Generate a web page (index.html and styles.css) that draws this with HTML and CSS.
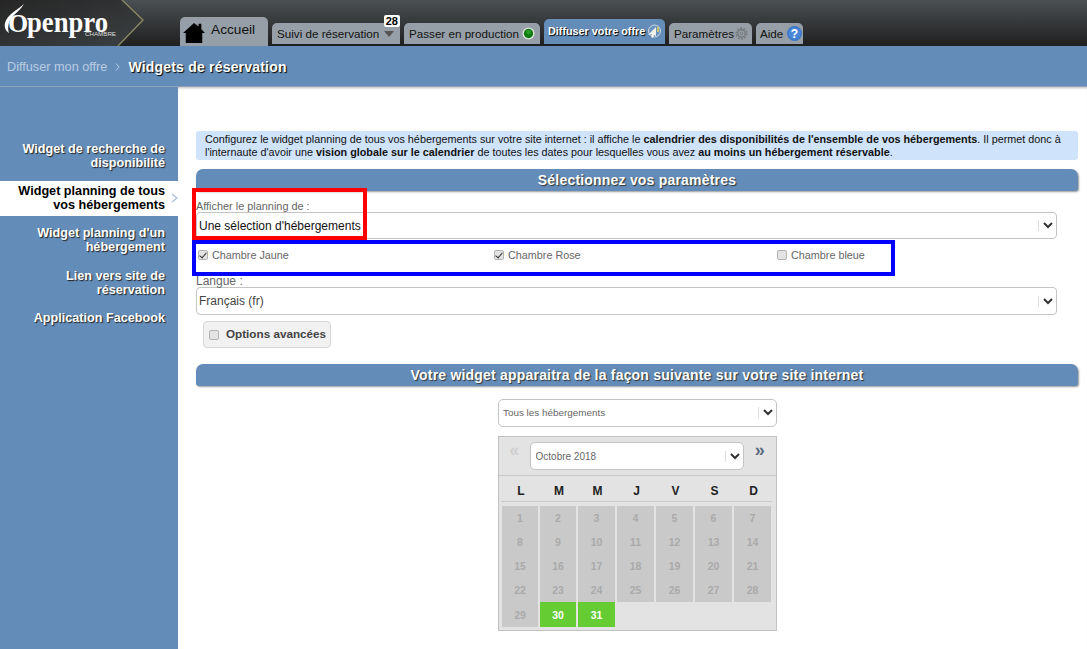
FILE: index.html
```html
<!DOCTYPE html>
<html lang="fr">
<head>
<meta charset="utf-8">
<title>Widgets de réservation</title>
<link rel="stylesheet" href="styles.css">
</head>
<body>
<header class="topbar">
  <div class="logo">
    <svg class="logo-art" width="150" height="46" viewBox="0 0 150 46">
      <defs><linearGradient id="lg" x1="0" y1="0" x2="1" y2="1"><stop offset="0" stop-color="#262626"/><stop offset="1" stop-color="#3c4042"/></linearGradient></defs>
      <polygon points="0,0 122,0 143,20 118,46 0,46" fill="url(#lg)"/>
      <path d="M122 0 L143 20 L118 46" fill="none" stroke="#8d8a68" stroke-width="1.3"/>
      <path d="M24 4 C17 10 7 15 5 23 C4 28 6 31 9 33 C7 27 9 20 13 16 C17 12 21 9 24 4 Z" fill="#fff"/>
      <text class="logo-o" x="8" y="32">O</text>
      <text class="logo-name" x="27" y="32" textLength="81" lengthAdjust="spacingAndGlyphs">penpro</text>
      <text class="logo-sub" x="85" y="36" textLength="31" lengthAdjust="spacingAndGlyphs">CHAMBRE</text>
    </svg>
  </div>
  <nav class="tabs">
    <a class="tab tab-home">
      <svg width="22" height="22" viewBox="0 0 24 24"><path d="M12 1 L17 5 V2 H20 V8 L24 12 H21 V23 H3 V12 H0 Z" fill="#000"/></svg>
      <span>Accueil</span>
    </a>
    <a class="tab tab-suivi">
      <span>Suivi de réservation</span>
      <svg width="10" height="6" viewBox="0 0 12 7"><path d="M0 0 H12 L6 7 Z" fill="#555"/></svg>
      <b class="badge">28</b>
    </a>
    <a class="tab tab-prod">
      <span>Passer en production</span>
      <svg width="13" height="13" viewBox="0 0 14 14"><circle cx="7" cy="7" r="6.5" fill="#dfe5df"/><circle cx="7" cy="7" r="5" fill="#0e7a0e"/><circle cx="7" cy="5.5" r="2.5" fill="#2b9a2b"/></svg>
    </a>
    <a class="tab tab-active">
      <span>Diffuser votre offre</span>
      <svg width="14" height="16" viewBox="0 0 14 16"><circle cx="7.5" cy="7" r="6" fill="#6b93bf" stroke="#cfd8e2"/><path d="M1 11 L9 3 V12 L7 11 L6 14 L4 13 L5 10 Z" fill="#f1f1ea"/><path d="M11 3 V8" stroke="#e8d44a" stroke-width="1.5"/></svg>
    </a>
    <a class="tab tab-param">
      <span>Paramètres</span>
      <svg width="13" height="13" viewBox="0 0 14 14"><circle cx="7" cy="7" r="4" fill="none" stroke="#74797e" stroke-width="1.5"/><circle cx="7" cy="7" r="5.8" fill="none" stroke="#74797e" stroke-width="1.6" stroke-dasharray="2 1.6"/><circle cx="7" cy="7" r="1.5" fill="none" stroke="#74797e"/></svg>
    </a>
    <a class="tab tab-help">
      <span>Aide</span>
      <svg width="15" height="15" viewBox="0 0 15 15"><circle cx="7.5" cy="7.5" r="7.5" fill="#3b76c8"/><circle cx="7.5" cy="7.5" r="6" fill="#4a86d8"/><text class="help-mark" x="7.5" y="11.5">?</text></svg>
    </a>
  </nav>
</header>

<div class="crumbs">
  <span class="crumb-parent">Diffuser mon offre</span>
  <svg width="5" height="8" viewBox="0 0 5 8"><path d="M1 0.5 L4 4 L1 7.5" fill="none" stroke="#b9cce2"/></svg>
  <strong class="crumb-current">Widgets de réservation</strong>
</div>

<div class="layout">
  <aside class="side">
    <a class="side-item">Widget de recherche de disponibilité</a>
    <a class="side-item side-active">Widget planning de tous vos hébergements
      <svg class="side-arrow" width="7" height="10" viewBox="0 0 7 10"><path d="M1 1 L6 5 L1 9" fill="none" stroke="#a9bdd6" stroke-width="1.2"/></svg>
    </a>
    <a class="side-item side-wide">Widget planning d'un hébergement</a>
    <a class="side-item">Lien vers site de réservation</a>
    <a class="side-item">Application Facebook</a>
  </aside>

  <main class="content">
    <p class="info">Configurez le widget planning de tous vos hébergements sur votre site internet : il affiche le <b>calendrier des disponibilités de l'ensemble de vos hébergements</b>. Il permet donc à l'internaute d'avoir une <b>vision globale sur le calendrier</b> de toutes les dates pour lesquelles vous avez <b>au moins un hébergement réservable</b>.</p>

    <h2 class="section">Sélectionnez vos paramètres</h2>

    <div class="form">
      <div class="mark-red"></div>
      <div class="mark-blue"></div>
      <label class="field-label">Afficher le planning de :</label>
      <div class="select select-main">
        <span class="select-value is-dark">Une sélection d'hébergements</span>
        <i class="select-sep"></i>
        <svg class="chev" width="10" height="7" viewBox="0 0 10 7"><path d="M1 1 L5 5 L9 1" fill="none" stroke="#333" stroke-width="2"/></svg>
      </div>
      <div class="checks">
        <label class="check check-a"><input type="checkbox" checked>Chambre Jaune</label>
        <label class="check check-b"><input type="checkbox" checked>Chambre Rose</label>
        <label class="check check-c"><input type="checkbox">Chambre bleue</label>
      </div>
      <label class="field-label field-lang">Langue :</label>
      <div class="select select-main select-lang">
        <span class="select-value">Français (fr)</span>
        <i class="select-sep"></i>
        <svg class="chev" width="10" height="7" viewBox="0 0 10 7"><path d="M1 1 L5 5 L9 1" fill="none" stroke="#333" stroke-width="2"/></svg>
      </div>
      <label class="adv"><input type="checkbox">Options avancées</label>
    </div>

    <h2 class="section section-two">Votre widget apparaitra de la façon suivante sur votre site internet</h2>

    <div class="widget">
      <div class="select select-small">
        <span class="select-value">Tous les hébergements</span>
        <i class="select-sep"></i>
        <svg class="chev" width="10" height="7" viewBox="0 0 10 7"><path d="M1 1 L5 5 L9 1" fill="none" stroke="#333" stroke-width="2"/></svg>
      </div>
      <div class="cal">
        <div class="cal-head">
          <span class="cal-nav cal-prev">«</span>
          <div class="select select-month">
            <span class="select-value">Octobre 2018</span>
            <i class="select-sep"></i>
            <svg class="chev" width="10" height="7" viewBox="0 0 10 7"><path d="M1 1 L5 5 L9 1" fill="none" stroke="#333" stroke-width="2"/></svg>
          </div>
          <span class="cal-nav cal-next">»</span>
        </div>
        <div class="cal-days"><span>L</span><span>M</span><span>M</span><span>J</span><span>V</span><span>S</span><span>D</span></div>
        <div class="cal-grid">
          <span>1</span><span>2</span><span>3</span><span>4</span><span>5</span><span>6</span><span>7</span>
          <span>8</span><span>9</span><span>10</span><span>11</span><span>12</span><span>13</span><span>14</span>
          <span>15</span><span>16</span><span>17</span><span>18</span><span>19</span><span>20</span><span>21</span>
          <span>22</span><span>23</span><span>24</span><span>25</span><span>26</span><span>27</span><span>28</span>
          <span>29</span><span class="free">30</span><span class="free">31</span>
        </div>
      </div>
    </div>
  </main>
</div>
</body>
</html>
```

FILE: styles.css
```css
* { box-sizing: border-box; }
html, body { margin: 0; height: 649px; overflow: hidden; }
body { font-family: "Liberation Sans", Arial, sans-serif; background: #638cb9; color: #000; display: flex; flex-direction: column; }

.topbar { height: 46px; flex: none; display: flex; align-items: flex-end; background: linear-gradient(#4b5053, #1f1f1f); }
.logo { width: 180px; height: 46px; flex: none; }
.logo-art { display: block; }
.logo-name, .logo-o { font-family: "Liberation Serif", serif; font-weight: bold; font-size: 29px; fill: #fff; }
.logo-o { font-size: 26px; }
.logo-sub { font-size: 6px; fill: #ddd; }
.help-mark { font-size: 12px; font-weight: bold; fill: #fff; text-anchor: middle; }

.tabs { display: flex; align-items: flex-end; gap: 4px; height: 46px; }
.tab { position: relative; display: flex; align-items: center; height: 21px; margin-bottom: 2px; background: #969fa7; border-radius: 5px 5px 0 0; font-size: 11.65px; color: #111; white-space: nowrap; justify-content: space-between; }
.tab-home { width: 88px; height: 29px; margin-bottom: 0; padding: 0 0 0 3px; justify-content: flex-start; gap: 6px; font-size: 13.7px; }
.tab-home span { margin-top: -5px; }
.tab-home svg { margin-top: 2px; }
.tab-suivi { width: 128px; padding: 0 6px 0 5px; }
.tab-prod { width: 136px; padding: 0 5px; }
.tab-active { width: 121px; height: 25px; padding: 6px 4px 0; align-items: flex-start; background: #638cb9; color: #fff; font-weight: bold; font-size: 10.8px; text-shadow: 1px 1px 1px #000; }
.tab-active svg { margin-top: -1px; }
.tab-param { width: 83px; padding: 0 4px 0 5px; }
.tab-help { width: 47px; padding: 0 1px 0 4px; }
.badge { position: absolute; top: -8px; right: 0; background: #fff; color: #000; font-size: 11px; line-height: 12px; padding: 0 2px; border-radius: 2px; }

.crumbs { height: 41px; flex: none; display: flex; align-items: center; gap: 8px; padding-left: 7px; box-shadow: inset 0 -1px 0 #8fa3b8; }
.crumb-parent { font-size: 12.7px; color: #b9cce2; }
.crumb-current { font-size: 14px; letter-spacing: 0.2px; color: #fff; text-shadow: 1px 1px 1px #000; }

.layout { flex: 1; display: flex; min-height: 0; }
.side { width: 178px; flex: none; padding-top: 52px; }
.side-item { position: relative; display: block; height: 35px; margin-bottom: 7px; padding: 3px 13px 4px 12px; font-size: 12.65px; line-height: 14px; font-weight: bold; text-align: right; color: #fff; text-shadow: 1px 1px 1px #222; }
.side-wide { margin-bottom: 8px; }
.side-active { background: #fff; color: #000; text-shadow: none; }
.side-arrow { position: absolute; right: 0; top: 12px; }

.content { flex: 1; background: #fff; padding: 44px 9px 0 18px; box-shadow: inset 0 3px 3px -2px #bbb; min-width: 0; }
.info { margin: 0; height: 29px; padding: 2px 9px; background: #cfe3fb; border-radius: 3px; font-size: 10.8px; line-height: 12.5px; color: #111; }
.section { margin: 9px 0 0; height: 22px; background: #638cb9; border-radius: 7px 7px 3px 3px; box-shadow: 1px 1px 2px #999; color: #fff; font-size: 14px; line-height: 22px; text-align: center; letter-spacing: 0.2px; text-shadow: 1px 1px 1px #333; }
.section-two { margin-top: 16px; }

.form { position: relative; width: 861px; }
.mark-red { position: absolute; left: -4px; top: -3px; width: 175px; height: 52px; border: 4px solid #f00; pointer-events: none; }
.mark-blue { position: absolute; left: -4px; top: 49px; width: 703px; height: 36px; border: 4px solid #00f; pointer-events: none; }
.field-label { display: block; padding-top: 9px; height: 21px; font-size: 10.9px; line-height: 12px; color: #666; }
.field-lang { padding-top: 2px; height: 14px; font-size: 12px; line-height: 13px; }

.select { display: flex; align-items: center; background: #fff; border: 1px solid #c4c4c4; border-radius: 4px; }
.select-main { height: 27px; padding: 0 3px 0 2px; font-size: 12px; }
.select-lang { height: 28px; }
.select-value { flex: 1; color: #444; white-space: nowrap; overflow: hidden; }
.is-dark { color: #111; }
.select-sep { width: 1px; height: 11px; background: #ddd; margin-right: 4px; }
.chev { flex: none; }

.checks { height: 34px; display: flex; align-items: center; font-size: 10.8px; color: #666; padding-bottom: 3px; }
.check { display: flex; flex: none; align-items: center; gap: 4px; }
.check-a { width: 296px; margin-left: 2px; }
.check-b { width: 283px; }
.check-c { width: 100px; }
input[type="checkbox"] { appearance: none; position: relative; flex: none; width: 10px; height: 10px; margin: 0; background: #e4e4e4; border: 1px solid #b4b4b4; border-radius: 2px; }
input[type="checkbox"]:checked::after { content: ""; position: absolute; left: 2px; top: 0; width: 3px; height: 6px; border: solid #333; border-width: 0 1.5px 1.5px 0; transform: rotate(40deg); }

.adv { display: flex; align-items: center; gap: 7px; width: 128px; height: 27px; margin: 6px 0 0 7px; padding: 0 0 2px 5px; background: #f1f1f1; border: 1px solid #d6d6d6; border-radius: 4px; font-size: 11.7px; font-weight: bold; color: #444; }
.adv input { margin-top: 2px; }

.widget { width: 279px; margin: 13px 0 0 302px; }
.select-small { height: 28px; padding: 0 3px 1px 4px; font-size: 9.9px; border-radius: 5px; }
.select-small .select-value, .select-month .select-value { color: #666; }
.cal { height: 195px; margin-top: 9px; background: #e3e3e3; border: 1px solid #c2c2c2; }
.cal-head { height: 39px; display: flex; align-items: flex-start; padding: 5px 0 0; border-bottom: 1px solid #c8c8c8; }
.cal-nav { width: 31px; margin-top: 1px; text-align: center; font-size: 18px; line-height: 15px; font-weight: bold; color: #cfcfcf; }
.cal-next { width: 33px; color: #5a6a80; }
.select-month { width: 214px; height: 28px; padding: 0 3px 0 5px; font-size: 10px; border-radius: 5px; flex: none; }
.cal-days { display: grid; grid-template-columns: 36px 36px 37px 37px 37px 37px 37px; gap: 2px; height: 26px; margin: 0 4px 0 2px; padding-left: 2px; border-bottom: 1px solid #cbcbcb; font-size: 12px; font-weight: bold; line-height: 30px; text-align: center; color: #222; }
.cal-grid { display: grid; grid-template-columns: 36px 36px 37px 37px 37px 37px 37px; grid-template-rows: repeat(4, 24px) 25px; column-gap: 2px; margin: 4px 5px 0 3px; font-size: 10.5px; font-weight: bold; color: #aaa; }
.cal-grid span { display: flex; align-items: center; justify-content: center; background: #c9c9c9; }
.cal-grid .free { background: #66cc33; color: #fff; }
```
